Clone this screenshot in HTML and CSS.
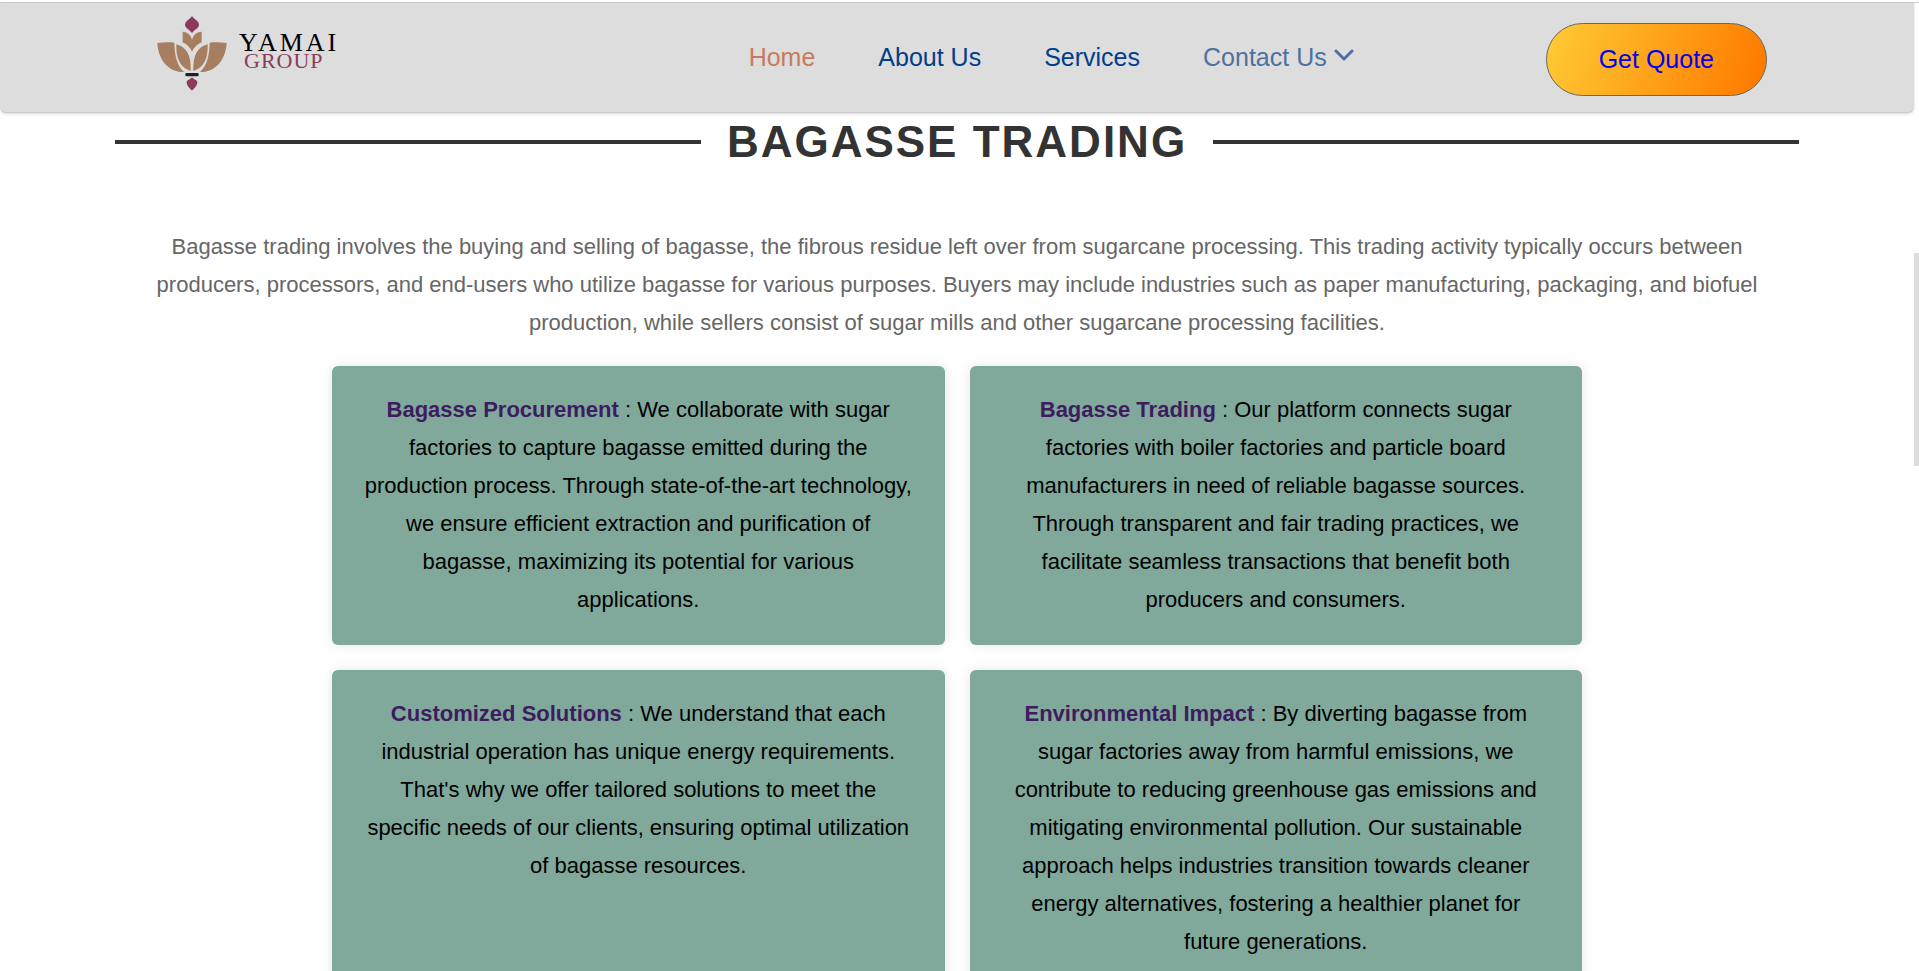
FILE: index.html
```html
<!DOCTYPE html>
<html lang="en">
<head>
<meta charset="utf-8">
<meta name="viewport" content="width=device-width, initial-scale=1">
<title>Yamai Group - Bagasse Trading</title>
<link rel="stylesheet" href="styles.css">
</head>
<body>
<div class="page">
  <header class="header">
    <a class="logo" href="#home" aria-label="Yamai Group">
      <svg class="logo-mark" width="70" height="78" viewBox="0 0 210 234" aria-hidden="true">
        <g fill="#8c3a5c">
          <path d="M105 3C111 13 126 18 126 29C126 39 112 44 105 54C98 44 84 39 84 29C84 18 99 13 105 3Z"/>
          <path d="M105 187C109 193 121 196 121 201C121 214 111 220 105 227C99 220 89 214 89 201C89 196 101 193 105 187Z"/>
        </g>
        <g fill="#a77e60">
          <path d="M77 50C92 50 103 62 105 76C107 62 118 50 134 50V82C120 88 110 98 105 110C100 98 90 88 77 82Z"/>
          <path d="M1 84C20 81 38 81 52 83C53 124 60 151 81 171C37 173 4 137 1 84Z"/>
          <path d="M209 84C190 81 172 81 158 83C157 124 150 151 129 171C173 173 206 137 209 84Z"/>
          <path d="M58 88C88 96 103 120 101 168C72 160 56 132 58 88Z"/>
          <path d="M152 88C122 96 107 120 109 168C138 160 154 132 152 88Z"/>
        </g>
        <rect x="85" y="174" width="40" height="10" rx="4" fill="#222222"/>
      </svg>
      <span class="logo-text">
        <span class="logo-name">YAMAI</span>
        <span class="logo-sub">GROUP</span>
      </span>
    </a>
    <nav class="nav" aria-label="Main">
      <a class="nav-link nav-link-active" href="#home">Home</a>
      <a class="nav-link" href="#about">About Us</a>
      <a class="nav-link" href="#services">Services</a>
      <a class="nav-link nav-link-menu" href="#contact">Contact Us
        <svg width="21" height="18" viewBox="0 0 21 18" fill="none" stroke="currentColor" stroke-width="3" stroke-linecap="round" stroke-linejoin="round" aria-hidden="true"><path d="M2 3L10 11L18 3"/></svg>
      </a>
    </nav>
    <button class="quote" type="button">Get Quote</button>
  </header>
  <main class="main">
    <h1 class="title">BAGASSE TRADING</h1>
    <p class="intro">Bagasse trading involves the buying and selling of bagasse, the fibrous residue left over from sugarcane processing. This trading activity typically occurs between producers, processors, and end-users who utilize bagasse for various purposes. Buyers may include industries such as paper manufacturing, packaging, and biofuel production, while sellers consist of sugar mills and other sugarcane processing facilities.</p>
    <div class="cards">
      <p class="card"><strong>Bagasse Procurement</strong> : We collaborate with sugar factories to capture bagasse emitted during the production process. Through state-of-the-art technology, we ensure efficient extraction and purification of bagasse, maximizing its potential for various applications.</p>
      <p class="card"><strong>Bagasse Trading</strong> : Our platform connects sugar factories with boiler factories and particle board manufacturers in need of reliable bagasse sources. Through transparent and fair trading practices, we facilitate seamless transactions that benefit both producers and consumers.</p>
      <p class="card"><strong>Customized Solutions</strong> : We understand that each industrial operation has unique energy requirements. That's why we offer tailored solutions to meet the specific needs of our clients, ensuring optimal utilization of bagasse resources.</p>
      <p class="card"><strong>Environmental Impact</strong> : By diverting bagasse from sugar factories away from harmful emissions, we contribute to reducing greenhouse gas emissions and mitigating environmental pollution. Our sustainable approach helps industries transition towards cleaner energy alternatives, fostering a healthier planet for future generations.</p>
    </div>
  </main>
</div>
<div class="scroll-thumb" aria-hidden="true"></div>
</body>
</html>
```

FILE: styles.css
```css
* {
  box-sizing: border-box;
}

body {
  margin: 0;
  height: 100vh;
  padding-top: 2px;
  overflow: hidden;
  position: relative;
  background: #ffffff;
  font-family: "Liberation Sans", Arial, sans-serif;
}

.page {
  border-top: 1px solid #cccccc;
  padding-right: 5px;
}

.header {
  display: grid;
  grid-template-columns: 1fr auto auto;
  column-gap: 191px;
  align-items: start;
  height: 110px;
  padding: 0 147px 0 157px;
  background: #dddddd;
  border-bottom: 1px solid #cccccc;
  border-radius: 0 0 6px 6px;
  box-shadow: 0 1px 3px rgba(0, 0, 0, 0.15);
}

.logo {
  display: flex;
  gap: 12px;
  padding-top: 12px;
  text-decoration: none;
}

.logo-text {
  display: flex;
  flex-direction: column;
  padding-top: 18px;
  font-family: "Liberation Serif", "Times New Roman", serif;
}

.logo-name {
  color: #000000;
  font-size: 26px;
  line-height: 20px;
  letter-spacing: 3px;
}

.logo-sub {
  padding-left: 5px;
  color: #8c3a5c;
  font-size: 22px;
  line-height: 16px;
  letter-spacing: 1px;
}

.nav {
  display: flex;
  gap: 63px;
  padding-top: 40px;
}

.nav-link {
  color: #003e8a;
  font-size: 25px;
  line-height: 28px;
  text-decoration: none;
  white-space: nowrap;
}

.nav-link-active {
  color: #c87b5c;
}

.nav-link-menu {
  color: #4f71a0;
}

.quote {
  margin-top: 20px;
  padding: 21px 52px;
  border: 1px solid #666666;
  border-radius: 37px;
  background: linear-gradient(110deg, #ffc733 5%, #ff7b00 95%);
  color: #0000ee;
  font: 25px/29px "Liberation Sans", Arial, sans-serif;
}

.main {
  padding: 0 6%;
  text-align: center;
}

.title {
  display: flex;
  align-items: center;
  gap: 26px;
  margin: 0 0 57px;
  color: #333333;
  font-size: 44px;
  line-height: 58px;
  letter-spacing: 2px;
  white-space: nowrap;
}

.title::before,
.title::after {
  content: "";
  flex: 1;
  height: 4px;
  background: #333333;
}

.intro {
  margin: 0 0 24px;
  padding: 0 12px;
  color: #666666;
  font-size: 22px;
  line-height: 38px;
}

.cards {
  display: grid;
  grid-template-columns: 1fr 1fr;
  gap: 25px;
  max-width: 1250px;
  margin: 0 auto;
}

.card {
  margin: 0;
  padding: 25px 32px 26px;
  border-radius: 6px;
  background: #80a99b;
  box-shadow: 0 0 12px rgba(0, 0, 0, 0.1);
  color: #000000;
  font-size: 22px;
  line-height: 38px;
}

.card strong {
  color: #3e1c60;
}

.scroll-thumb {
  position: absolute;
  top: 253px;
  right: 0;
  width: 5px;
  height: 213px;
  background: #dddddd;
}
```
